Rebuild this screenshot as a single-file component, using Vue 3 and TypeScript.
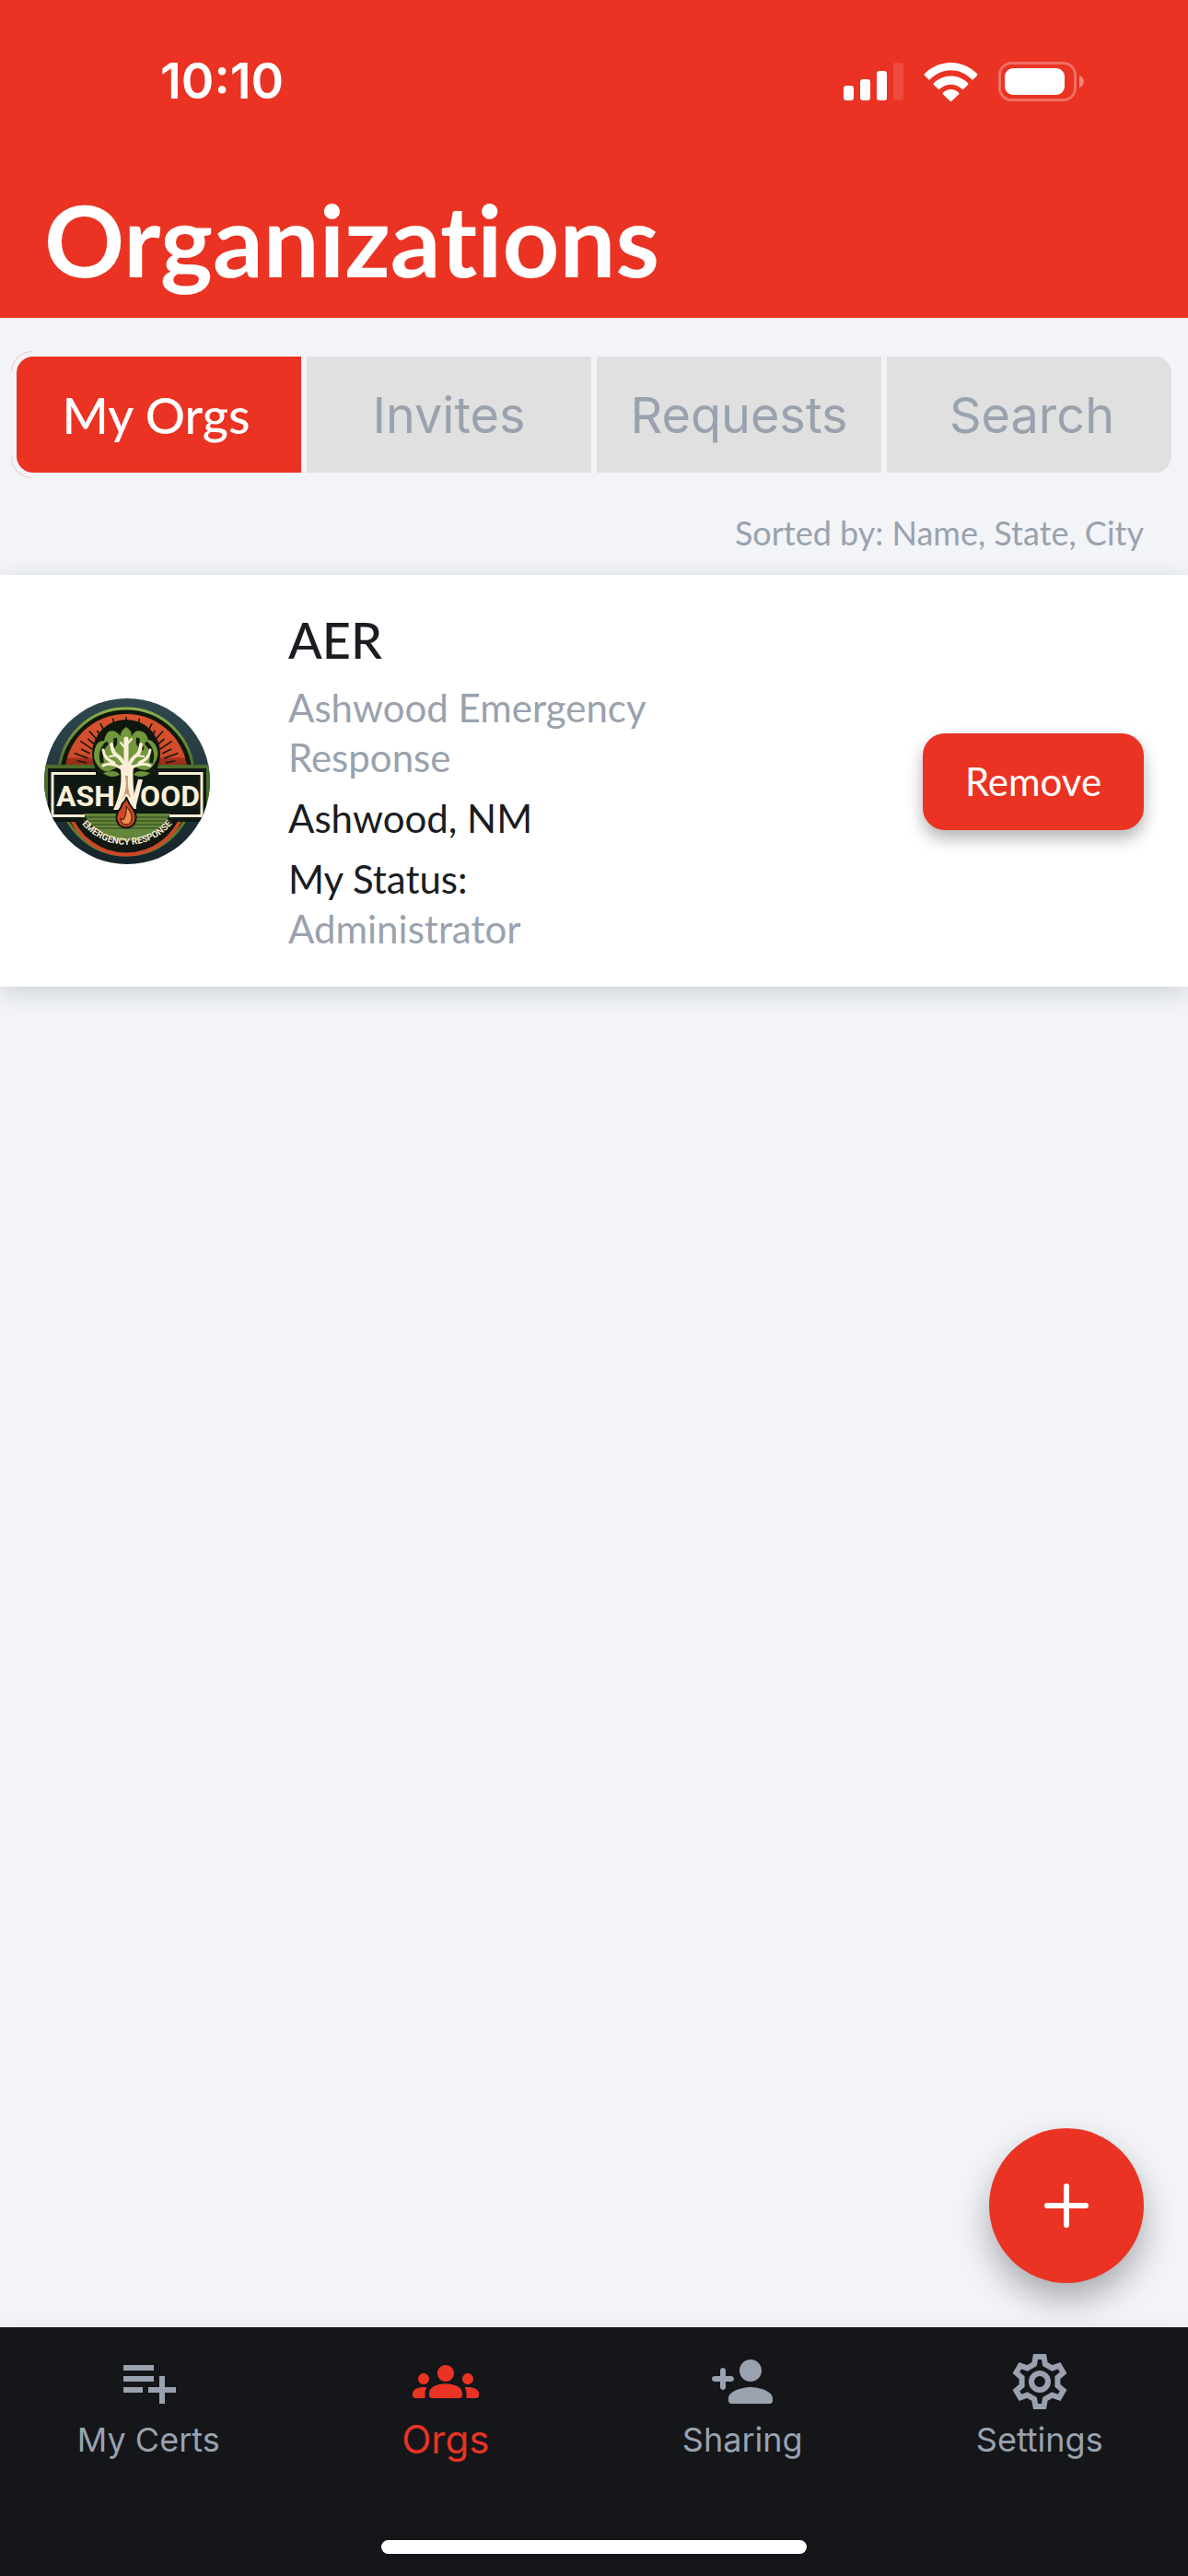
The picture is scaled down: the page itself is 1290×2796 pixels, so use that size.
<script setup lang="ts">
import { ref } from 'vue'

type Tab = { label: string }
type NavItem = { label: string; icon: string }

const tabs: Tab[] = [
  { label: 'My Orgs' },
  { label: 'Invites' },
  { label: 'Requests' },
  { label: 'Search' },
]
const activeTab = ref('My Orgs')

const navItems: NavItem[] = [
  { label: 'My Certs', icon: 'list' },
  { label: 'Orgs', icon: 'groups' },
  { label: 'Sharing', icon: 'person' },
  { label: 'Settings', icon: 'gear' },
]
const activeNav = ref('Orgs')

const iconPaths: Record<string, string> = {
  list: 'M14 10H3v2h11v-2zm0-4H3v2h11V6zm4 8v-4h-2v4h-4v2h4v4h2v-4h4v-2h-4zM3 16h7v-2H3v2z',
  groups:
    'M12 12.75c1.63 0 3.07.39 4.24.9 1.08.48 1.76 1.56 1.76 2.73V17c0 .55-.45 1-1 1H7c-.55 0-1-.45-1-1v-.61c0-1.18.68-2.26 1.76-2.73 1.17-.52 2.61-.91 4.24-.91zM4 13c1.1 0 2-.9 2-2s-.9-2-2-2-2 .9-2 2 .9 2 2 2zm1.13 1.1C4.76 14.04 4.39 14 4 14c-.99 0-1.93.21-2.78.58C.48 14.9 0 15.62 0 16.43V17c0 .55.45 1 1 1h3.5v-1.61c0-.83.23-1.61.63-2.29zM20 13c1.1 0 2-.9 2-2s-.9-2-2-2-2 .9-2 2 .9 2 2 2zm4 3.43c0-.81-.48-1.53-1.22-1.85-.85-.37-1.79-.58-2.78-.58-.39 0-.76.04-1.13.1.4.68.63 1.46.63 2.29V18H23c.55 0 1-.45 1-1v-.57zM12 6c1.66 0 3 1.34 3 3s-1.34 3-3 3-3-1.34-3-3 1.34-3 3-3z',
  person:
    'M15 12c2.21 0 4-1.79 4-4s-1.79-4-4-4-4 1.79-4 4 1.79 4 4 4zm-9-2V8c0-.55-.45-1-1-1s-1 .45-1 1v2H2c-.55 0-1 .45-1 1s.45 1 1 1h2v2c0 .55.45 1 1 1s1-.45 1-1v-2h2c.55 0 1-.45 1-1s-.45-1-1-1H6zm9 4c-2.67 0-8 1.34-8 4v1c0 .55.45 1 1 1h14c.55 0 1-.45 1-1v-1c0-2.66-5.33-4-8-4z',
}

/* One gear tooth, turned in six steps round the hub. */
const tooth = [
  [-5.9, -19],
  [-4.5, -27],
  [4.5, -27],
  [5.9, -19],
]
const gearPoints = [0, 1, 2, 3, 4, 5]
  .flatMap((step) => {
    const a = (step * Math.PI) / 3
    return tooth.map(([x, y]) => {
      const px = 12 + (x * Math.cos(a) - y * Math.sin(a)) / 3
      const py = 12 + (x * Math.sin(a) + y * Math.cos(a)) / 3
      return `${px.toFixed(2)},${py.toFixed(2)}`
    })
  })
  .join(' ')

/* Sun rays behind the tree of the Ashwood badge. */
const rays = Array.from({ length: 25 }, (_, i) => {
  const a = ((-174 + i * 7) * Math.PI) / 180
  const inner = 44
  const outer = i % 2 ? 55 : 60
  return {
    x1: 89 + inner * Math.cos(a),
    y1: 80 + inner * Math.sin(a),
    x2: 89 + outer * Math.cos(a),
    y2: 80 + outer * Math.sin(a),
  }
})
</script>

<template>
  <div class="app">
    <header class="header">
      <div class="status">
        <span class="time">10:10</span>
        <svg class="status-icons" width="264" height="44" viewBox="0 0 264 44" aria-hidden="true">
          <g fill="#fff">
            <rect x="2" y="27" width="11" height="16" rx="3" />
            <rect x="20" y="20" width="11" height="23" rx="3" />
            <rect x="38" y="11" width="11" height="32" rx="3" />
            <rect x="56" y="2" width="11" height="41" rx="3" opacity=".12" />
            <path d="M90 14C106-2 131-2 147 14q.8 1 0 2l-4 4q-1 1-2 0C128 7 109 7 96 20q-1 1-2 0l-4-4q-.8-1 0-2z" />
            <path d="M100 24c10.500-10 26.500-10 37 0q.8 1 0 2l-4.500 4.500q-1 1-2 0c-6.500-6.500-17.500-6.500-24 0q-1 1-2 0L100 26q-.8-1 0-2z" />
            <path d="M110 34.500c5-4.800 12-4.800 17 0q.8 1 0 2l-7.500 7q-1 1-2 0l-7.500-7q-.8-1 0-2z" />
            <rect x="177" y="8" width="65" height="29" rx="9" />
            <path d="M258 16c6.500 2 6.500 11 0 13z" opacity=".4" />
          </g>
          <rect x="171.500" y="2.500" width="82" height="40" rx="13" fill="none" stroke="#fff" stroke-width="3" opacity=".3" />
        </svg>
      </div>
      <h1 class="title">Organizations</h1>
    </header>

    <main class="content">
      <div class="tabs" role="tablist">
        <button
          v-for="tab in tabs"
          :key="tab.label"
          type="button"
          role="tab"
          class="tab"
          :class="{ active: tab.label === activeTab }"
          :aria-selected="tab.label === activeTab"
          @click="activeTab = tab.label"
        >
          {{ tab.label }}
        </button>
      </div>

      <p class="sorted">Sorted by: Name, State, City</p>

      <article class="card">
        <svg class="logo" viewBox="0 0 180 180" role="img" aria-label="Ashwood Emergency Response">
          <defs>
            <linearGradient id="night" x1="0" y1="0" x2="0" y2="1">
              <stop offset="0" stop-color="#2f484e" />
              <stop offset="1" stop-color="#15252b" />
            </linearGradient>
            <linearGradient id="sun" x1="0" y1="0" x2="0" y2="1">
              <stop offset="0" stop-color="#d9552e" />
              <stop offset=".7" stop-color="#cf4b2a" />
              <stop offset=".72" stop-color="#a3301c" />
              <stop offset="1" stop-color="#7d2416" />
            </linearGradient>
            <linearGradient id="ring" x1="0" y1="0" x2="0" y2="1">
              <stop offset="0" stop-color="#8db04a" />
              <stop offset=".4" stop-color="#4d6d2b" />
              <stop offset="1" stop-color="#5f8234" />
            </linearGradient>
            <clipPath id="disc"><circle cx="90" cy="90" r="90" /></clipPath>
            <path id="motto" d="M34 126A64 64 0 0 0 146 126" />
          </defs>
          <g clip-path="url(#disc)">
            <rect width="180" height="180" fill="url(#night)" />
            <path d="M16 84A73 73 0 0 1 162 84V97A73 73 0 0 1 16 97Z" fill="#10170f" stroke="url(#ring)" stroke-width="3" />
            <path d="M22 84A67 67 0 0 1 156 84Z" fill="url(#sun)" />
            <line
              v-for="(ray, i) in rays"
              :key="i"
              :x1="ray.x1"
              :y1="ray.y1"
              :x2="ray.x2"
              :y2="ray.y2"
              stroke="#15130e"
              stroke-width="1.500"
            />
            <path d="M27 124A65 65 0 0 0 151 124" fill="none" stroke="#cc4829" stroke-width="4" />
            <path d="M2 133V74H178V133" fill="none" stroke="#4d6d2b" stroke-width="4" />
            <rect x="4" y="76" width="172" height="58" fill="#0f1812" />
            <path d="M43 125H137A52 52 0 0 1 43 125Z" fill="#64863a" />
            <path d="M40 129H140M42 133H138M46 137H134M51 141H129" stroke="#2b4220" stroke-width="1" />
            <rect x="9" y="81" width="162" height="44" fill="#0f1812" />
            <path d="M44 127.500H9V81.500H171V127.500H136" fill="none" stroke="#f6ecd5" stroke-width="3" />
            <path d="M56 78H124V86H56Z" fill="#0f1812" />
            <circle cx="89" cy="60" r="37" fill="#10170f" />
            <path
              d="M89 31q-7 5-6 10-6-8-13-5-4 4-5 10-8 0-10 9-3 10 3 18 6 8 13 6l8-4 10-8 11 8q12 7 19-3 7-10 3-19-4-8-9-8-2-8-7-9-7-3-11 5 0-6-6-10Z"
              fill="#72983c"
            />
            <path d="M63 70q-4-14 6-22M116 70q4-14-6-22M77 43q2 8-5 12M102 43q-2 8 6 12M58 77q11 10 22 4M120 77q-11 10-21 4" fill="none" stroke="#14200f" stroke-width="4" />
            <path d="M64 81q8 7 18 2-4-7-18-2ZM115 81q-8 7-18 2 4-7 18-2Z" fill="#6b9139" />
            <g fill="none" stroke="#fbefd8" stroke-linecap="round" stroke-linejoin="round">
              <path d="M89 78V44" stroke-width="5" />
              <path d="M88 74Q84 65 79 62T73 50M91 74q5-10 9-12t5-12" stroke-width="4" />
              <path d="M86 78Q74 68 64 73M92 78q12-10 23-5M76 70q-11-4-12-14M103 70q11-4 12-14" stroke-width="3" />
              <path d="M79 62l-8 1M100 62l8 1M89 55l-6-7M89 51l6-7" stroke-width="2" />
            </g>
            <path d="M82 72H97Q95 92 100 120H93L89 107 83 121H75Q87 95 82 72Z" fill="#fbefd8" />
            <path d="M91 84q-1 14 3 24l-5-5-6 9q8-12 5-28Z" fill="#c69a71" />
            <path d="M93 120L102 88H107L99 120Z" fill="#fbefd8" />
            <text class="logo-name" x="13" y="117">ASH</text>
            <text class="logo-name" x="169" y="117" text-anchor="end">OOD</text>
            <path d="M89 107q3 8 8 14 6 10-1 17-7 5-14 0-6-6-2-15 4-5 5-9 4-3 4-7Z" fill="#ce4527" stroke="#10170f" stroke-width="2" />
            <path d="M89 117q7 8 6 14-1 6-6 6-6 0-6-7l3 2q4-6 3-15Z" fill="#ef8d4b" stroke="#2a1510" stroke-width="1" />
            <text class="logo-motto" text-anchor="middle">
              <textPath href="#motto" startOffset="50%">EMERGENCY RESPONSE</textPath>
            </text>
          </g>
        </svg>

        <div class="info">
          <h2 class="code">AER</h2>
          <p class="muted">Ashwood Emergency Response</p>
          <p>Ashwood, NM</p>
          <p>My Status: <span class="role">Administrator</span></p>
        </div>

        <button type="button" class="remove">Remove</button>
      </article>

      <button type="button" class="fab" aria-label="Add organization">
        <svg width="48" height="48" viewBox="0 0 48 48" aria-hidden="true">
          <path d="M24 3v42M3 24h42" stroke="#fff" stroke-width="6" stroke-linecap="round" />
        </svg>
      </button>
    </main>

    <footer class="footer">
      <nav class="nav">
        <a
          v-for="item in navItems"
          :key="item.label"
          href="#"
          class="nav-item"
          :class="{ current: item.label === activeNav }"
          @click.prevent="activeNav = item.label"
        >
          <svg width="72" height="72" viewBox="0 0 24 24" aria-hidden="true">
            <g v-if="item.icon === 'gear'" fill="none" stroke="currentColor" stroke-width="2">
              <polygon :points="gearPoints" />
              <circle cx="12" cy="12" r="3" />
            </g>
            <path v-else :d="iconPaths[item.icon]" fill="currentColor" />
          </svg>
          <span>{{ item.label }}</span>
        </a>
      </nav>
      <div class="home-bar"></div>
    </footer>
  </div>
</template>

<style>
body {
  margin: 0;
  background: #f2f4f8;
}
</style>

<style scoped>
.app {
  --red: #ea3323;
  --page: #f2f4f8;
  --grey: #99a2ae;
  --ink: #1a1d22;
  display: flex;
  flex-direction: column;
  min-height: 100vh;
  background: var(--page);
  color: var(--ink);
  font-family: Lato, sans-serif;
  font-variant-ligatures: none;
}

button {
  margin: 0;
  padding: 0;
  border: 0;
  font-family: inherit;
  cursor: pointer;
}

h1,
h2,
p {
  margin: 0;
}

.header {
  padding-bottom: 16px;
  background: var(--red);
  color: #fff;
}

.status {
  display: flex;
  align-items: center;
  justify-content: space-between;
  height: 176px;
  padding: 0 112px 0 174px;
}

.time {
  font: 600 54px/60px Inter, sans-serif;
}

.title {
  padding: 19px 48px 6px;
  font-size: 108px;
  font-weight: 700;
  line-height: 128px;
}

.content {
  position: relative;
  flex: 1;
}

.tabs {
  display: grid;
  grid-template-columns: repeat(4, 1fr);
  gap: 6px;
  margin: 42px 18px 0;
}

.tab {
  position: relative;
  height: 126px;
  padding-top: 2px;
  background: #e0e0e0;
  color: var(--grey);
  font: 400 54px/60px Inter, sans-serif;
}

.tab:first-child {
  padding-right: 6px;
  border-radius: 18px 0 0 18px;
}

.tab:last-child {
  padding-left: 6px;
  border-radius: 0 18px 18px 0;
}

.tab.active {
  background: var(--red);
  color: #fff;
  font: 500 54px/60px Lato, sans-serif;
}

/* Hairline arcs round the outer corners of the selected first tab. */
.tab.active:first-child::before,
.tab.active:first-child::after {
  content: '';
  position: absolute;
  left: -6px;
  width: 22px;
  height: 22px;
  border-left: 1px solid #f3c9cb;
}

.tab.active:first-child::before {
  top: -6px;
  border-top: 1px solid #f3c9cb;
  border-top-left-radius: 23px;
}

.tab.active:first-child::after {
  bottom: -6px;
  border-bottom: 1px solid #f3c9cb;
  border-bottom-left-radius: 23px;
}

.sorted {
  padding: 42px 48px 23px;
  color: var(--grey);
  font-size: 36px;
  line-height: 46px;
  text-align: right;
}

.card {
  display: flex;
  align-items: center;
  padding: 37px 48px 36px;
  background: #fff;
  box-shadow: 0 6px 24px rgba(20, 30, 45, 0.16);
}

.logo {
  flex: none;
  width: 180px;
  height: 180px;
}

.logo-name {
  fill: #fbefd8;
  font: 700 32px Roboto, sans-serif;
}

.logo-motto {
  fill: #f6ecd5;
  font: 700 10px Roboto, sans-serif;
}

.info {
  display: flex;
  flex-direction: column;
  gap: 12px;
  width: 420px;
  margin-left: 85px;
  font-size: 42px;
  line-height: 54px;
}

.code {
  font-size: 54px;
  font-weight: 500;
  line-height: 68px;
}

.muted,
.role {
  color: var(--grey);
}

.role {
  display: block;
}

.remove {
  width: 240px;
  height: 105px;
  margin-left: auto;
  border-radius: 24px;
  background: var(--red);
  color: #fff;
  font-size: 42px;
  line-height: 54px;
  box-shadow: 0 9px 18px rgba(0, 0, 0, 0.3);
}

.fab {
  position: absolute;
  right: 48px;
  bottom: 48px;
  display: grid;
  place-items: center;
  width: 168px;
  height: 168px;
  border-radius: 50%;
  background: var(--red);
  box-shadow: 0 18px 36px rgba(0, 0, 0, 0.3);
}

.footer {
  position: relative;
  display: flex;
  flex-direction: column;
  align-items: center;
  justify-content: space-between;
  height: 270px;
  background: #14161a;
  box-shadow: 0 0 18px rgba(20, 20, 30, 0.06);
}

.nav {
  display: grid;
  grid-template-columns: repeat(4, 1fr);
  width: 100%;
  padding-top: 23px;
}

.nav-item {
  display: flex;
  flex-direction: column;
  align-items: center;
  color: var(--grey);
  font: 400 36px/54px Inter, sans-serif;
  text-decoration: none;
}

.nav-item.current {
  color: var(--red);
  font-size: 42px;
}

.home-bar {
  width: 462px;
  height: 15px;
  margin-bottom: 24px;
  border-radius: 8px;
  background: #fff;
}
</style>
